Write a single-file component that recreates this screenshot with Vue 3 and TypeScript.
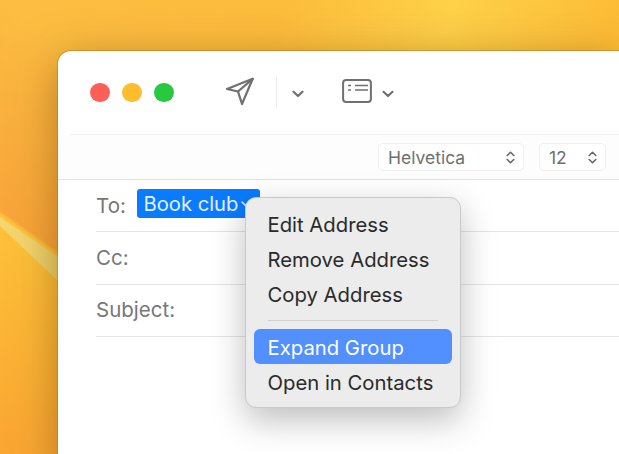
<script setup lang="ts">
const menuTop: string[] = ['Edit Address', 'Remove Address', 'Copy Address']
const fields: { label: string; chip?: string }[] = [
  { label: 'To:', chip: 'Book club' },
  { label: 'Cc:' },
  { label: 'Subject:' },
]
</script>

<template>
  <div class="desk">
    <svg class="wall" width="58" height="454" viewBox="0 0 58 454">
      <defs>
        <linearGradient id="streak" x1="0" y1="0" x2="1" y2="0">
          <stop offset="0" stop-color="#f6dc84" stop-opacity="0.75" />
          <stop offset="1" stop-color="#e8d876" stop-opacity="0.8" />
        </linearGradient>
      </defs>
      <polygon points="0,217 58,257 58,281 0,226" fill="url(#streak)" />
    </svg>
    <div class="window">
      <header class="toolbar">
        <div class="lights">
          <span class="light red"></span>
          <span class="light amber"></span>
          <span class="light green"></span>
        </div>
        <svg class="send" width="30" height="30" viewBox="0 0 30 30" fill="none" stroke="#707070" stroke-width="2.2" stroke-linejoin="round" stroke-linecap="round">
          <path d="M2 12 L27.7 1.8 L17 27 L13 14.5 Z" />
          <path d="M13 14.5 L27.7 1.8" />
        </svg>
        <span class="divider"></span>
        <svg class="chev first" width="12" height="8" viewBox="0 0 12 8" fill="none" stroke="#707070" stroke-width="2.2" stroke-linecap="round" stroke-linejoin="round">
          <path d="M1.5 1.8 L6 6 L10.5 1.8" />
        </svg>
        <svg class="list" width="30" height="24" viewBox="0 0 30 24" fill="none" stroke="#707070">
          <rect x="1.1" y="1.1" width="27.8" height="21.8" rx="3" stroke-width="2" />
          <path d="M6 6.4 H9 M6 11 H9 M13 6.4 H26 M13 11 H26" stroke-width="1.5" />
        </svg>
        <svg class="chev second" width="12" height="8" viewBox="0 0 12 8" fill="none" stroke="#707070" stroke-width="2.2" stroke-linecap="round" stroke-linejoin="round">
          <path d="M1.5 1.8 L6 6 L10.5 1.8" />
        </svg>
      </header>

      <div class="format">
        <div class="select font">
          <span>Helvetica</span>
          <svg width="9" height="13" viewBox="0 0 9 13" fill="none" stroke="#666" stroke-width="1.6" stroke-linecap="round" stroke-linejoin="round">
            <path d="M1.2 4.5 L4.5 1.3 L7.8 4.5 M1.2 8.5 L4.5 11.7 L7.8 8.5" />
          </svg>
        </div>
        <div class="select size">
          <span>12</span>
          <svg width="9" height="13" viewBox="0 0 9 13" fill="none" stroke="#666" stroke-width="1.6" stroke-linecap="round" stroke-linejoin="round">
            <path d="M1.2 4.5 L4.5 1.3 L7.8 4.5 M1.2 8.5 L4.5 11.7 L7.8 8.5" />
          </svg>
        </div>
      </div>

      <div v-for="f in fields" :key="f.label" class="field">
        <span class="label">{{ f.label }}</span>
        <span v-if="f.chip" class="chip">
          {{ f.chip }}
          <svg width="9" height="6" viewBox="0 0 9 6" fill="none" stroke="#e4efff" stroke-width="1.6" stroke-linecap="round" stroke-linejoin="round">
            <path d="M1 1 L4.5 4.5 L8 1" />
          </svg>
        </span>
      </div>
    </div>

    <div class="menu">
      <div v-for="m in menuTop" :key="m" class="item">{{ m }}</div>
      <div class="sep"></div>
      <div class="item lower active">Expand Group</div>
      <div class="item lower">Open in Contacts</div>
    </div>
  </div>
</template>

<style scoped>
.desk {
  position: relative;
  width: 619px;
  height: 454px;
  overflow: hidden;
  box-sizing: border-box;
  padding: 51px 0 0 58px;
  font-family: Inter, "Liberation Sans", sans-serif;
  background:
    linear-gradient(100deg, rgba(255, 215, 80, 0) 45%, rgba(255, 218, 80, 0.7) 72%, rgba(255, 215, 80, 0) 100%) 0 0 / 100% 60px no-repeat,
    linear-gradient(215deg, #fdbb34 0, #fcbd42 49%, #f8a539 72.5%, #fec23a 73%, #faa532 100%);
}
.wall {
  position: absolute;
  left: 0;
  top: 0;
}
.window {
  position: relative;
  height: 420px;
  background: #fff;
  border-radius: 13px 0 0 0;
  box-shadow: 0 0 0 1px rgba(170, 110, 30, 0.4), 0 10px 45px rgba(110, 60, 0, 0.5);
}
.toolbar {
  display: flex;
  align-items: center;
  height: 84px;
  box-sizing: border-box;
  padding-left: 20px;
  margin-left: 12px;
  border-bottom: 1px solid #efefef;
}
.lights {
  display: flex;
  gap: 12.5px;
}
.light {
  width: 19.5px;
  height: 19.5px;
  border-radius: 50%;
}
.red { background: #ff5f57; }
.amber { background: #febc2e; }
.green { background: #28c840; }
.send { margin-left: 51px; margin-top: -1px; }
.divider {
  width: 1px;
  height: 32px;
  background: #ececec;
  margin-left: 21px;
}
.chev.first { margin-left: 15px; margin-top: 2px; }
.list { margin-left: 38px; margin-top: -3px; }
.chev.second { margin-left: 10px; margin-top: 2px; }
.format {
  display: flex;
  justify-content: flex-end;
  align-items: center;
  gap: 15px;
  height: 45px;
  box-sizing: border-box;
  padding: 0 13px 0 0;
  background: #fdfdfd;
  border-bottom: 1px solid #e2e2e2;
}
.select {
  display: flex;
  align-items: center;
  justify-content: space-between;
  box-sizing: border-box;
  height: 28px;
  border: 1px solid #f0f0f0;
  border-radius: 5px;
  padding: 0 8px 0 9px;
  background: #fff;
  font-size: 17.5px;
  color: #6f6f6f;
}
.font { width: 146px; }
.size { width: 67px; }
.field {
  display: flex;
  align-items: center;
  height: 52.3px;
  box-sizing: border-box;
  margin-left: 38px;
  padding-bottom: 1px;
  border-bottom: 1px solid #e4e4e4;
  font-size: 20.5px;
  color: #777;
}
.label {
  width: 41px;
}
.chip {
  display: inline-flex;
  align-items: center;
  gap: 3px;
  margin-top: -3px;
  background: #0a7bff;
  color: #e4efff;
  border-radius: 3px;
  font-size: 20.2px;
  height: 29px;
  line-height: 29px;
  padding: 0 10px 0 6.5px;
}
.menu {
  position: absolute;
  left: 245px;
  top: 197px;
  width: 216px;
  height: 211px;
  box-sizing: border-box;
  padding: 10px 8px;
  background: #ececec;
  border: 1px solid #c9c9c9;
  border-radius: 11px;
  box-shadow: 0 12px 34px rgba(0, 0, 0, 0.26);
}
.item {
  height: 35px;
  line-height: 33.5px;
  padding-left: 13.5px;
  font-size: 20.3px;
  color: #2a2a2a;
  border-radius: 6px;
}
.item.lower {
  line-height: 37.5px;
}
.item.active {
  background: #528fff;
  color: #fff;
}
.sep {
  height: 1px;
  background: #d2d2d2;
  margin: 7px 14px 8px;
}
</style>

<style>
html, body { margin: 0; }
</style>
